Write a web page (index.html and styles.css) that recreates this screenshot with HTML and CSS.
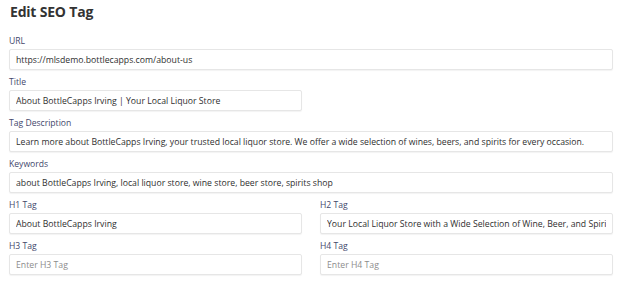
FILE: index.html
```html
<!DOCTYPE html>
<html lang="en">

<head>
    <meta charset="UTF-8">
    <meta name="viewport" content="width=device-width, initial-scale=1.0">
    <title>Edit SEO Tag</title>
    <link rel="stylesheet" href="styles.css">
</head>

<body>

    <div class="page">
        <h1>Edit SEO Tag</h1>

        <div class="field">
            <label for="url">URL</label>
            <input id="url" type="text" value="https://mlsdemo.bottlecapps.com/about-us">
        </div>

        <div class="row">
            <div class="field">
                <label for="title">Title</label>
                <input id="title" type="text" value="About BottleCapps Irving | Your Local Liquor Store">
            </div>
            <div></div>
        </div>

        <div class="field">
            <label for="desc">Tag Description</label>
            <input id="desc" type="text" value="Learn more about BottleCapps Irving, your trusted local liquor store. We offer a wide selection of wines, beers, and spirits for every occasion.">
        </div>

        <div class="field">
            <label for="keywords">Keywords</label>
            <input id="keywords" type="text" value="about BottleCapps Irving, local liquor store, wine store, beer store, spirits shop">
        </div>

        <div class="row">
            <div class="field">
                <label for="h1">H1 Tag</label>
                <input id="h1" type="text" value="About BottleCapps Irving">
            </div>
            <div class="field">
                <label for="h2">H2 Tag</label>
                <input id="h2" type="text" value="Your Local Liquor Store with a Wide Selection of Wine, Beer, and Spirits">
            </div>
        </div>

        <div class="row">
            <div class="field">
                <label for="h3">H3 Tag</label>
                <input id="h3" type="text" placeholder="Enter H3 Tag">
            </div>
            <div class="field">
                <label for="h4">H4 Tag</label>
                <input id="h4" type="text" placeholder="Enter H4 Tag">
            </div>
        </div>
    </div>

</body>
</html>
```

FILE: styles.css
```css
body {
    font-family: "Open Sans", Arial, sans-serif;
    background-color: #ffffff;
    margin: 0;
    padding: 0;
    color: #333;
}

.page {
    padding: 3px 12px 0 9px;
}

h1 {
    font-size: 14px;
    font-weight: 700;
    letter-spacing: -0.2px;
    color: #333;
    margin: 0 0 14px 1px;
    line-height: 18px;
}

.field {
    display: flex;
    flex-direction: column;
    margin-bottom: 6px;
}

.field label {
    font-size: 8.6px;
    line-height: 12px;
    color: #43476b;
    margin-bottom: 2px;
}

.field input {
    font-family: "Open Sans", Arial, sans-serif;
    font-size: 8.7px;
    color: #2f2f2f;
    height: 21px;
    box-sizing: border-box;
    padding: 0 6px;
    border: 1px solid #e6e6e6;
    border-radius: 2px;
    box-shadow: 0 1px 1px rgba(0, 0, 0, 0.05);
    outline: none;
}

.field input::placeholder {
    color: #8c8c8c;
}

.row {
    display: grid;
    grid-template-columns: 1fr 1fr;
    gap: 18px;
}
```
